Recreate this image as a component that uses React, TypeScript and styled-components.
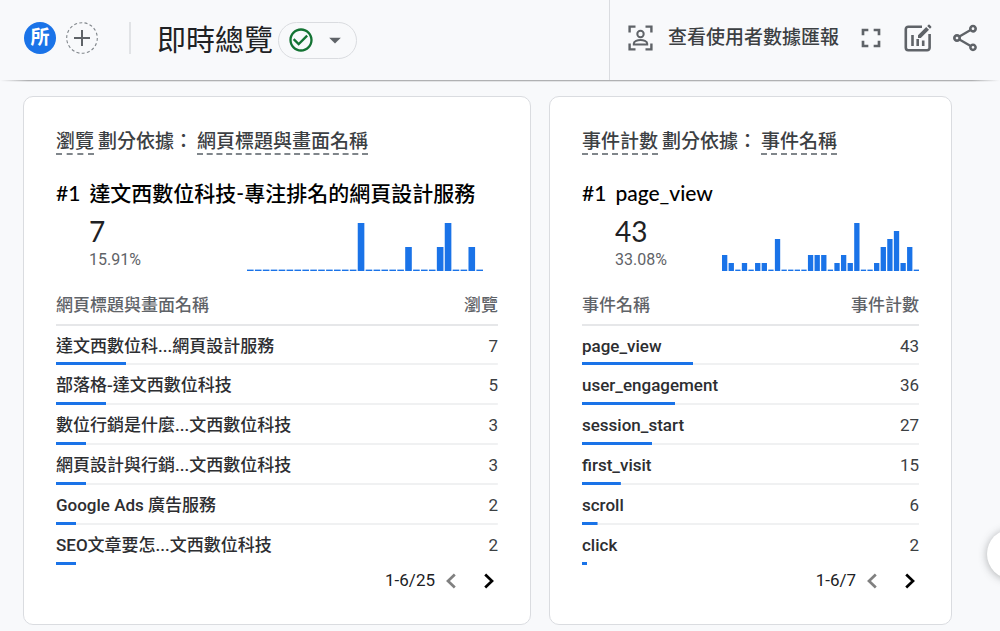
import React from 'react';
import styled, { createGlobalStyle, css } from 'styled-components';
import { MdArrowDropDown, MdCheckCircleOutline, MdFullscreen, MdOutlineShare } from 'react-icons/md';

const textFont = `Roboto, "Noto Sans CJK TC", sans-serif`;
const displayFont = `Lato, "Noto Sans CJK TC", sans-serif`;

const color = {
  page: '#f8f9fb',
  ink: '#202124',
  text: '#3c4043',
  muted: '#5f6368',
  line: '#dadce0',
  blue: '#1a73e8',
  green: '#137333',
};

const GlobalStyle = createGlobalStyle`
  * { box-sizing: border-box; }
  body {
    margin: 0;
    background: ${color.page};
    color: ${color.ink};
    font-family: ${textFont};
    overflow-x: hidden;
  }
  button {
    margin: 0;
    padding: 0;
    border: 0;
    background: none;
    color: inherit;
    font: inherit;
    cursor: pointer;
  }
  svg { display: block; flex: none; }
`;

const edgeLine = (shade: string) =>
  `linear-gradient(90deg, transparent, ${shade} 28px, ${shade} calc(100% - 28px), transparent)`;

const Header = styled.header`
  display: flex;
  height: 82px;
  padding-bottom: 2px;
  background:
    ${edgeLine('#b0b1b3')} 0 80px / 100% 1px no-repeat,
    ${edgeLine('#e3e4e6')} 0 81px / 100% 1px no-repeat;
`;

const HeaderMain = styled.div`
  flex: 1;
  display: flex;
  align-items: center;
  padding: 0 24px 4px;
`;

const Avatar = styled.button`
  width: 32px;
  height: 32px;
  border-radius: 50%;
  background: ${color.blue};
  color: #fff;
  font-size: 19px;
  line-height: 30px;
  font-weight: 700;
`;

const AddButton = styled.button`
  margin-left: 10px;
`;

const Divider = styled.span`
  width: 2px;
  height: 32px;
  margin: 0 26px 0 31px;
  background: #e1e3e6;
`;

const TitleGroup = styled.div`
  display: flex;
  align-items: center;
  gap: 5px;
  padding-top: 4px;
`;

const PageTitle = styled.h1`
  margin: 0;
  padding-top: 2px;
  font-size: 29px;
  line-height: 36px;
  font-weight: 400;
  white-space: nowrap;
`;

const StatusPill = styled.button`
  display: flex;
  align-items: center;
  justify-content: space-between;
  width: 79px;
  height: 37px;
  padding: 0 7px 0 8px;
  border: 1px solid ${color.line};
  border-radius: 19px;
  color: ${color.muted};
`;

const HeaderTools = styled.div`
  display: flex;
  align-items: center;
  padding: 0 12px 4px 18px;
  border-left: 1px solid ${color.line};
  color: ${color.muted};
`;

const SnapshotButton = styled.button`
  display: flex;
  align-items: center;
  gap: 14px;
  margin-right: 8px;
  color: ${color.text};
  font-size: 19px;
  line-height: 28px;
  font-weight: 500;
  white-space: nowrap;
`;

const IconButton = styled.button`
  display: flex;
  align-items: center;
  justify-content: center;
  width: 47px;
  height: 48px;
`;

const Cards = styled.main`
  display: grid;
  grid-template-columns: 508fr 403fr;
  gap: 18px;
  padding: 14px 48px 6px 23px;
`;

const Panel = styled.section`
  min-width: 0;
  padding: 32px 32px 27px;
  border: 1px solid ${color.line};
  border-radius: 10px;
  background: #fff;
`;

const PanelTitle = styled.div`
  display: flex;
  align-items: flex-start;
  gap: 4px;
  height: 28px;
  color: ${color.text};
  font-size: 19px;
  line-height: 26px;
  font-weight: 500;
  white-space: nowrap;
`;

const Picker = styled.button`
  height: 26px;
  border-bottom: 2px dashed #80868b;
  line-height: 26px;
`;

const TopItem = styled.h2`
  display: flex;
  gap: 9px;
  margin: 22px 0 8px;
  color: #000;
  font-family: ${displayFont};
  font-size: 21px;
  line-height: 28px;
  font-weight: 500;
  white-space: nowrap;
`;

const Summary = styled.div`
  display: flex;
  justify-content: space-between;
  align-items: flex-start;
  height: 70px;
  padding-left: 33px;
`;

const Total = styled.div`
  color: ${color.ink};
  font-family: ${displayFont};
  font-size: 28px;
  line-height: 32px;
`;

const Share = styled.div`
  color: ${color.muted};
  font-size: 16px;
  line-height: 26px;
`;

const Chart = styled.svg<{ $inset: boolean }>`
  height: 48px;
  margin: 8px ${(p) => (p.$inset ? '15px' : '0')} 0 0;
`;

const DataTable = styled.table`
  width: 100%;
  border-collapse: collapse;
  font-size: 17px;
  line-height: 24px;
`;

const HeadCell = styled.th<{ $end?: boolean }>`
  height: 40px;
  padding: 1px 0 0;
  border-bottom: 2px solid #e6e7e9;
  color: ${color.muted};
  font-weight: 500;
  text-align: ${(p) => (p.$end ? 'right' : 'left')};
`;

const Row = styled.tr<{ $ratio: number }>`
  height: 40px;
  background:
    linear-gradient(${color.blue}, ${color.blue}) 0 100% / ${(p) => p.$ratio * 100}% 3px no-repeat,
    linear-gradient(#f0f1f2, #f0f1f2) 0 100% / 100% 2px no-repeat;
  &:last-child {
    background: linear-gradient(${color.blue}, ${color.blue}) 0 100% /
      ${(p) => p.$ratio * 100}% 3px no-repeat;
  }
`;

const cell = css`
  padding: 0;
  white-space: nowrap;
`;

const NameCell = styled.td`
  ${cell}
  color: #2d2e31;
  font-weight: 500;
`;

const ValueCell = styled.td`
  ${cell}
  color: ${color.text};
  text-align: right;
`;

const Pager = styled.nav`
  display: flex;
  align-items: center;
  justify-content: flex-end;
  height: 32px;
  font-size: 17px;
  line-height: 24px;
`;

const PageRange = styled.span`
  padding-bottom: 2px;
`;

const PageButton = styled.button<{ $gap: number }>`
  display: flex;
  align-items: center;
  justify-content: center;
  width: 18px;
  height: 32px;
  margin-left: ${(p) => p.$gap}px;
  color: #000;
  &:disabled {
    color: #808080;
  }
`;

const HelpBubble = styled.button`
  position: fixed;
  right: -37px;
  bottom: 52px;
  width: 50px;
  height: 50px;
  border-radius: 50%;
  background: #fff;
  box-shadow: 0 1px 8px rgba(60, 64, 67, 0.4);
`;

function PlusIcon() {
  return (
    <svg width="32" height="32" viewBox="0 0 32 32" fill="none">
      <circle cx="16" cy="16" r="15.3" stroke="#80868b" strokeWidth="1.1" strokeDasharray="3 2.3" />
      <path d="M16 8v16M8 16h16" stroke={color.muted} strokeWidth="2" />
    </svg>
  );
}

function SnapshotIcon() {
  return (
    <svg width="26" height="26" viewBox="0 0 26 26" fill="none" stroke={color.muted} strokeWidth="2.4">
      <path d="M1.6 7.5V1.6h5.9M17.5 1.6h5.9v5.9M23.4 18.5v5.9h-5.9M7.5 24.4H1.6v-5.9" />
      <circle cx="12.5" cy="9" r="3.2" strokeWidth="2" />
      <path d="M5.8 19.6v-1.1c0-2.3 3.8-3.6 6.7-3.6s6.7 1.3 6.7 3.6v1.1z" strokeWidth="2" />
    </svg>
  );
}

function EditChartIcon() {
  return (
    <svg width="28" height="28" viewBox="0 0 28 28" fill="none">
      <path
        d="M18 2.8H4.2a2.4 2.4 0 0 0-2.4 2.4v18.6a2.4 2.4 0 0 0 2.4 2.4h19a2.4 2.4 0 0 0 2.4-2.4V10"
        stroke={color.muted}
        strokeWidth="2.6"
      />
      <path d="M8.5 11v11M13.7 15v7M19.2 16.5V22" stroke={color.muted} strokeWidth="2.6" />
      <path
        d="M14 11.2 22.2 3l2.8 2.8-8.2 8.2H14zM23.2 2l1.2-1.2a.9.9 0 0 1 1.2 0l1.6 1.6a.9.9 0 0 1 0 1.2L26 4.8z"
        fill={color.muted}
      />
    </svg>
  );
}

function Chevron({ flip }: { flip?: boolean }) {
  return (
    <svg width="12" height="18" viewBox="0 0 12 18" fill="none" stroke="currentColor" strokeWidth="2.7">
      <path d={flip ? 'M9.8 2.5 3 9l6.8 6.5' : 'M2.2 2.5 9 9l-6.8 6.5'} />
    </svg>
  );
}

interface SparkProps {
  values: number[];
  width: number;
  inset: boolean;
}

function Spark({ values, width, inset }: SparkProps) {
  const gap = 1.3;
  const step = (width + gap) / values.length;
  const peak = Math.max(...values);
  return (
    <Chart $inset={inset} width={width} height={48} viewBox={`0 0 ${width} 48`} role="img" aria-label="每分鐘">
      {values.map((v, i) => {
        const h = Math.max(1.4, (v / peak) * 48);
        return <rect key={i} x={i * step} y={48 - h} width={step - gap} height={h} fill={color.blue} />;
      })}
    </Chart>
  );
}

interface CardData {
  metric: string;
  dimension: string;
  top: string;
  total: number;
  share: string;
  spark: number[];
  sparkWidth: number;
  sparkInset: boolean;
  sum: number;
  rows: [string, number][];
  range: string;
}

const cards: CardData[] = [
  {
    metric: '瀏覽',
    dimension: '網頁標題與畫面名稱',
    top: '達文西數位科技-專注排名的網頁設計服務',
    total: 7,
    share: '15.91%',
    spark: [0, 0, 0, 0, 0, 0, 0, 0, 0, 0, 0, 0, 0, 0, 2, 0, 0, 0, 0, 0, 1, 0, 0, 0, 1, 2, 0, 0, 1, 0],
    sparkWidth: 236,
    sparkInset: true,
    sum: 44,
    rows: [
      ['達文西數位科...網頁設計服務', 7],
      ['部落格-達文西數位科技', 5],
      ['數位行銷是什麼...文西數位科技', 3],
      ['網頁設計與行銷...文西數位科技', 3],
      ['Google Ads 廣告服務', 2],
      ['SEO文章要怎...文西數位科技', 2],
    ],
    range: '1-6/25',
  },
  {
    metric: '事件計數',
    dimension: '事件名稱',
    top: 'page_view',
    total: 43,
    share: '33.08%',
    spark: [2, 1, 0, 1, 0, 1, 1, 0, 4, 0, 0, 0, 0, 2, 2, 2, 0, 1, 2, 1, 6, 0, 0, 1, 3, 4, 5, 1, 3, 0],
    sparkWidth: 197,
    sparkInset: false,
    sum: 130,
    rows: [
      ['page_view', 43],
      ['user_engagement', 36],
      ['session_start', 27],
      ['first_visit', 15],
      ['scroll', 6],
      ['click', 2],
    ],
    range: '1-6/7',
  },
];

function MetricCard({ data }: { data: CardData }) {
  return (
    <Panel>
      <PanelTitle>
        <Picker>{data.metric}</Picker>
        <span>劃分依據：</span>
        <Picker>{data.dimension}</Picker>
      </PanelTitle>
      <TopItem>
        <span>#1</span>
        <span>{data.top}</span>
      </TopItem>
      <Summary>
        <div>
          <Total>{data.total}</Total>
          <Share>{data.share}</Share>
        </div>
        <Spark values={data.spark} width={data.sparkWidth} inset={data.sparkInset} />
      </Summary>
      <DataTable>
        <thead>
          <tr>
            <HeadCell scope="col">{data.dimension}</HeadCell>
            <HeadCell scope="col" $end>
              {data.metric}
            </HeadCell>
          </tr>
        </thead>
        <tbody>
          {data.rows.map(([name, value]) => (
            <Row key={name} $ratio={value / data.sum}>
              <NameCell>{name}</NameCell>
              <ValueCell>{value}</ValueCell>
            </Row>
          ))}
        </tbody>
      </DataTable>
      <Pager>
        <PageRange>{data.range}</PageRange>
        <PageButton $gap={7} disabled aria-label="上一頁">
          <Chevron flip />
        </PageButton>
        <PageButton $gap={20} aria-label="下一頁">
          <Chevron />
        </PageButton>
      </Pager>
    </Panel>
  );
}

export default function App() {
  return (
    <>
      <GlobalStyle />
      <Header>
        <HeaderMain>
          <Avatar>所</Avatar>
          <AddButton aria-label="新增比較">
            <PlusIcon />
          </AddButton>
          <Divider />
          <TitleGroup>
            <PageTitle>即時總覽</PageTitle>
            <StatusPill aria-label="狀態">
              <MdCheckCircleOutline size={28} color={color.green} />
              <MdArrowDropDown size={28} />
            </StatusPill>
          </TitleGroup>
        </HeaderMain>
        <HeaderTools>
          <SnapshotButton>
            <SnapshotIcon />
            查看使用者數據匯報
          </SnapshotButton>
          <IconButton aria-label="全螢幕">
            <MdFullscreen size={32} />
          </IconButton>
          <IconButton aria-label="編輯比較項目">
            <EditChartIcon />
          </IconButton>
          <IconButton aria-label="分享">
            <MdOutlineShare size={32} />
          </IconButton>
        </HeaderTools>
      </Header>
      <Cards>
        {cards.map((card) => (
          <MetricCard key={card.metric} data={card} />
        ))}
      </Cards>
      <HelpBubble aria-label="說明" />
    </>
  );
}
